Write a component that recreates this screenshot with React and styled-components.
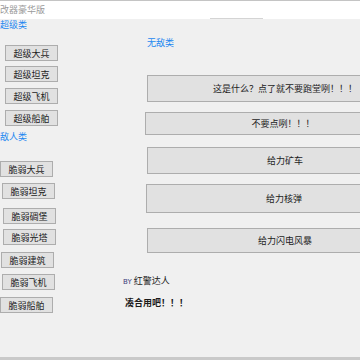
import React from "react";
import styled, { createGlobalStyle } from "styled-components";

const superUnits = [
  { label: "超级大兵", top: 15, left: 5 },
  { label: "超级坦克", top: 5, left: 5 },
  { label: "超级飞机", top: 6, left: 5 },
  { label: "超级船舶", top: 6, left: 5 },
];

const weakUnits = [
  { label: "脆弱大兵", top: 19, left: 0 },
  { label: "脆弱坦克", top: 6, left: 2 },
  { label: "脆弱碉堡", top: 9, left: 3 },
  { label: "脆弱光塔", top: 5, left: 3 },
  { label: "脆弱建筑", top: 7, left: 1 },
  { label: "脆弱飞机", top: 6, left: 2 },
  { label: "脆弱船舶", top: 7, left: 0 },
];

const cheats = [
  { label: "这是什么？点了就不要跑堂咧！！！", top: 27, left: 24, height: 27 },
  { label: "不要点咧！！！", top: 10, left: 22, height: 23 },
  { label: "给力矿车", top: 12, left: 24, height: 27 },
  { label: "给力核弹", top: 10, left: 23, height: 29 },
  { label: "给力闪电风暴", top: 15, left: 24, height: 25 },
];

export default function App() {
  return (
    <>
      <GlobalStyle />
      <Window>
        <TitleBar>
          <Title>改器豪华版</Title>
          <TabMark />
        </TitleBar>
        <Body>
          <LeftColumn>
            <GroupLabel $top={0}>超级类</GroupLabel>
            {superUnits.map((u) => (
              <SmallButton key={u.label} $top={u.top} $left={u.left}>
                {u.label}
              </SmallButton>
            ))}
            <GroupLabel $top={5}>敌人类</GroupLabel>
            {weakUnits.map((u) => (
              <SmallButton key={u.label} $top={u.top} $left={u.left}>
                {u.label}
              </SmallButton>
            ))}
          </LeftColumn>
          <RightColumn>
            <GroupLabel $top={18} $left={24}>
              无敌类
            </GroupLabel>
            {cheats.map((c) => (
              <WideButton key={c.label} $top={c.top} $left={c.left} $height={c.height}>
                {c.label}
              </WideButton>
            ))}
            <Credit>
              <small>BY</small> 红警达人
            </Credit>
            <Note>凑合用吧！！！</Note>
          </RightColumn>
        </Body>
      </Window>
    </>
  );
}

const GlobalStyle = createGlobalStyle`
  html, body {
    margin: 0;
    padding: 0;
    background: #f0f0f0;
    overflow: hidden;
  }
  body {
    font-family: "Noto Sans CJK SC", "Noto Sans", sans-serif;
  }
`;

const Window = styled.div`
  width: 360px;
  height: 360px;
  display: flex;
  flex-direction: column;
  overflow: hidden;
  background: #f0f0f0;
`;

const TitleBar = styled.div`
  height: 19px;
  box-sizing: border-box;
  background: #ffffff;
  border-top: 1px solid #c4c4c4;
  display: flex;
  flex-direction: column;
  justify-content: space-between;
`;

const Title = styled.div`
  font-size: 9px;
  line-height: 17px;
  color: #9a9a9a;
  padding-left: 0;
`;

const TabMark = styled.div`
  margin-left: 210px;
  width: 53px;
  height: 1px;
  background: #d4d4d4;
`;

const Body = styled.div`
  flex: 1;
  display: flex;
  border-bottom: 3px solid #c9c9c9;
  min-height: 0;
`;

const LeftColumn = styled.div`
  width: 123px;
  flex-shrink: 0;
  display: flex;
  flex-direction: column;
  align-items: flex-start;
`;

const RightColumn = styled.div`
  flex: 1;
  display: flex;
  flex-direction: column;
  align-items: flex-start;
`;

const GroupLabel = styled.div`
  margin-top: ${(p) => p.$top}px;
  margin-left: ${(p) => p.$left || 0}px;
  font-size: 9px;
  line-height: 11px;
  height: 11px;
  color: #1e88f0;
`;

const ButtonBase = styled.div`
  box-sizing: border-box;
  background: #e1e1e1;
  border: 1px solid #adadad;
  color: #1c1c1c;
  font-size: 9px;
  display: flex;
  align-items: center;
  justify-content: center;
  flex-shrink: 0;
`;

const SmallButton = styled(ButtonBase)`
  margin-top: ${(p) => p.$top}px;
  margin-left: ${(p) => p.$left}px;
  width: 53px;
  height: 16px;
`;

const WideButton = styled(ButtonBase)`
  margin-top: ${(p) => p.$top}px;
  margin-left: ${(p) => p.$left}px;
  width: 276px;
  height: ${(p) => p.$height}px;
`;

const Credit = styled.div`
  margin-top: 22px;
  font-size: 9px;
  line-height: 12px;
  color: #222;
  small {
    font-family: "DejaVu Sans", sans-serif;
    font-size: 7px;
    color: #3b3b7a;
  }
`;

const Note = styled.div`
  margin-top: 9px;
  margin-left: 2px;
  font-size: 9px;
  line-height: 12px;
  font-weight: 700;
  color: #1a1a1a;
`;
